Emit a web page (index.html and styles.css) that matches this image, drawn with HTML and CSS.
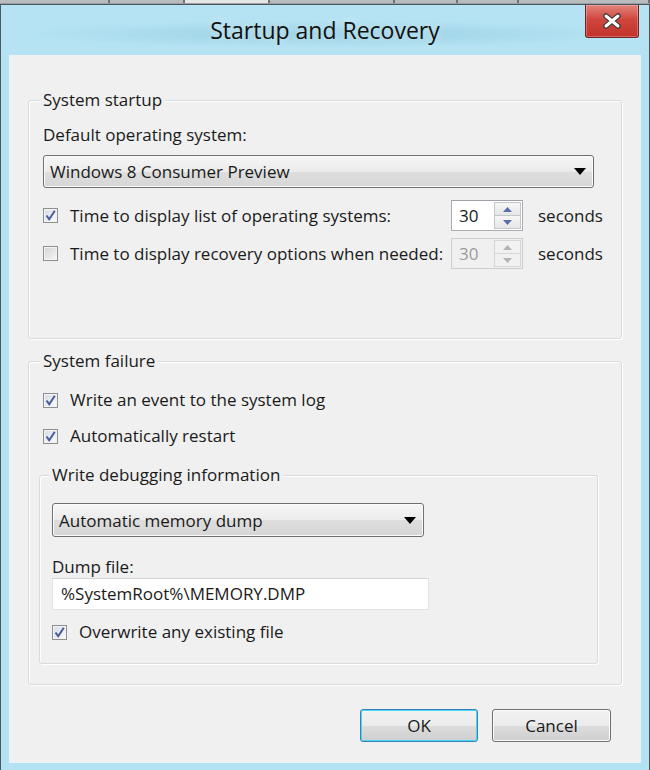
FILE: index.html
```html
<!DOCTYPE html>
<html lang="en">
<head>
    <meta charset="UTF-8">
    <meta name="viewport" content="width=device-width, initial-scale=1.0">
    <title>Startup and Recovery</title>
    <link rel="stylesheet" href="styles.css">
</head>
<body>
    <div class="taskstrip">
        <span style="width:110px"></span>
        <span style="width:75px"></span>
        <span class="active" style="width:85px"></span>
        <span style="width:125px"></span>
        <span style="width:63px"></span>
        <span style="width:60px"></span>
        <span style="width:132px"></span>
    </div>

    <div class="window">
        <div class="titlebar">
            <span></span>
            <span class="title">Startup and Recovery</span>
            <button class="close-btn" aria-label="Close">
                <svg width="20" height="16" viewBox="0 0 20 16">
                    <path d="M4 3 L16 13 M16 3 L4 13" stroke="#3a3a3a" stroke-width="5.5" stroke-linecap="round"/>
                    <path d="M4 3 L16 13 M16 3 L4 13" stroke="#ffffff" stroke-width="3" stroke-linecap="round"/>
                </svg>
            </button>
        </div>

        <div class="client">
            <!-- System startup -->
            <fieldset class="group startup">
                <legend>System startup</legend>
                <div class="label first">Default operating system:</div>
                <div class="select os-select">
                    <span>Windows 8 Consumer Preview</span>
                    <svg width="12" height="7" viewBox="0 0 12 7"><path d="M0 0 H12 L6 7 Z" fill="#000"/></svg>
                </div>

                <div class="timer-row row-one">
                    <label class="check-item">
                        <span class="check checked">
                            <svg width="13" height="13" viewBox="0 0 13 13"><path d="M2.5 6.5 L5.2 10.2 L10.8 1.8" fill="none" stroke="#4a5d9c" stroke-width="2"/></svg>
                        </span>
                        Time to display list of operating systems:
                    </label>
                    <div class="spin">
                        <span class="spin-value">30</span>
                        <span class="spin-btns">
                            <span class="spin-btn"><svg width="9" height="5" viewBox="0 0 9 5"><path d="M0 5 L4.5 0 L9 5 Z" fill="#5a6eae"/></svg></span>
                            <span class="spin-btn"><svg width="9" height="5" viewBox="0 0 9 5"><path d="M0 0 H9 L4.5 5 Z" fill="#5a6eae"/></svg></span>
                        </span>
                    </div>
                    <span class="unit">seconds</span>
                </div>

                <div class="timer-row row-two">
                    <label class="check-item">
                        <span class="check"></span>
                        Time to display recovery options when needed:
                    </label>
                    <div class="spin disabled">
                        <span class="spin-value">30</span>
                        <span class="spin-btns">
                            <span class="spin-btn"><svg width="9" height="5" viewBox="0 0 9 5"><path d="M0 5 L4.5 0 L9 5 Z" fill="#b4b4b4"/></svg></span>
                            <span class="spin-btn"><svg width="9" height="5" viewBox="0 0 9 5"><path d="M0 0 H9 L4.5 5 Z" fill="#b4b4b4"/></svg></span>
                        </span>
                    </div>
                    <span class="unit">seconds</span>
                </div>
            </fieldset>

            <!-- System failure -->
            <fieldset class="group failure">
                <legend>System failure</legend>
                <label class="check-item event-log">
                    <span class="check checked">
                        <svg width="13" height="13" viewBox="0 0 13 13"><path d="M2.5 6.5 L5.2 10.2 L10.8 1.8" fill="none" stroke="#4a5d9c" stroke-width="2"/></svg>
                    </span>
                    Write an event to the system log
                </label>
                <label class="check-item auto-restart">
                    <span class="check checked">
                        <svg width="13" height="13" viewBox="0 0 13 13"><path d="M2.5 6.5 L5.2 10.2 L10.8 1.8" fill="none" stroke="#4a5d9c" stroke-width="2"/></svg>
                    </span>
                    Automatically restart
                </label>

                <fieldset class="group debug">
                    <legend>Write debugging information</legend>
                    <div class="select dump-select">
                        <span>Automatic memory dump</span>
                        <svg width="12" height="7" viewBox="0 0 12 7"><path d="M0 0 H12 L6 7 Z" fill="#000"/></svg>
                    </div>
                    <div class="label dump-label">Dump file:</div>
                    <div class="textbox">%SystemRoot%\MEMORY.DMP</div>
                    <label class="check-item overwrite">
                        <span class="check checked">
                            <svg width="13" height="13" viewBox="0 0 13 13"><path d="M2.5 6.5 L5.2 10.2 L10.8 1.8" fill="none" stroke="#4a5d9c" stroke-width="2"/></svg>
                        </span>
                        Overwrite any existing file
                    </label>
                </fieldset>
            </fieldset>

            <div class="actions">
                <button class="btn default">OK</button>
                <button class="btn">Cancel</button>
            </div>
        </div>
    </div>
</body>
</html>
```

FILE: styles.css
```css
html, body {
    margin: 0;
    padding: 0;
}
body {
    width: 650px;
    height: 770px;
    overflow: hidden;
    background: #8f9396;
    font-family: "Open Sans", "Noto Sans", sans-serif;
    font-size: 17px;
    color: #1a1a1a;
}
.taskstrip {
    display: flex;
    height: 4px;
    background: #9a9ea1;
}
.taskstrip span {
    height: 3px;
    border-right: 2px solid #6e7275;
    background: #b9bcbe;
}
.taskstrip .active {
    background: #e6e6e6;
}
.window {
    border: 1px solid #4b565e;
    border-bottom: none;
    background: #b3e2f3;
    padding: 0 8px 8px;
}
.titlebar {
    display: grid;
    grid-template-columns: 1fr auto 1fr;
    height: 50px;
    margin: 0 -8px;
    background: radial-gradient(ellipse 300px 14px at 50% 58%, rgba(120, 185, 208, 0.45), rgba(120, 185, 208, 0) 100%), #b5e3f3;
}
.title {
    font-size: 23px;
    line-height: 50px;
    color: #111;
    text-shadow: 0 0 8px rgba(255, 255, 255, 0.6);
}
.close-btn {
    justify-self: end;
    align-self: start;
    width: 54px;
    height: 33px;
    margin-right: 10px;
    padding: 0;
    border: 1px solid #6d2622;
    border-top: none;
    border-radius: 0 0 3px 3px;
    background: linear-gradient(#e2857d, #d0463e 45%, #c1322a);
    box-shadow: inset 0 0 0 1px rgba(255, 200, 195, 0.35);
    display: flex;
    align-items: center;
    justify-content: center;
}
.client {
    background: #f0f0f0;
    padding: 35px 19px 20px;
    box-shadow: 0 1px 0 #e8f6fb;
}
.group {
    margin: 0;
    padding: 0 14px;
    min-width: 0;
    border: 1px solid #d5dbdf;
    border-radius: 3px;
    box-shadow: inset 1px 1px 0 #fff, 1px 1px 0 #fff;
}
.group legend {
    padding: 0 3px;
    margin-left: -3px;
    line-height: 20px;
    background: #f0f0f0;
}
.startup {
    padding-bottom: 69px;
}
.failure {
    margin-top: 12px;
    padding-bottom: 20px;
}
.label {
    line-height: 20px;
}
.label.first {
    margin-top: 15px;
}
.select {
    display: flex;
    align-items: center;
    justify-content: space-between;
    box-sizing: border-box;
    padding: 0 7px 0 6px;
    border: 1px solid #707070;
    border-radius: 3px;
    background: linear-gradient(#f6f6f6, #ebebeb 50%, #dedede 51%, #d6d6d6);
    box-shadow: inset 0 0 0 1px #fbfbfb;
}
.os-select {
    margin-top: 10px;
    height: 33px;
    width: 551px;
}
.timer-row {
    display: grid;
    grid-template-columns: minmax(0, 1fr) 72px 69px;
    column-gap: 15px;
    align-items: center;
    height: 31px;
}
.row-one {
    margin-top: 12px;
}
.row-two {
    margin-top: 7px;
}
.check-item {
    display: flex;
    align-items: center;
    gap: 12px;
    line-height: 20px;
    white-space: nowrap;
}
.check {
    box-sizing: border-box;
    width: 15px;
    height: 15px;
    flex: none;
    border: 1px solid #8e8f8f;
    background: linear-gradient(135deg, #d4d4d4, #f7f7f7);
    box-shadow: inset 0 0 0 1px #f4f4f4;
    display: flex;
    align-items: center;
    justify-content: center;
}
.check.checked {
    background: linear-gradient(135deg, #d6dbe6, #fbfbfb);
}
.spin {
    display: flex;
    box-sizing: border-box;
    height: 31px;
    border: 1px solid #abadb3;
    border-top-color: #9fa2a8;
    background: #fff;
}
.spin-value {
    flex: 1;
    padding-left: 7px;
    line-height: 29px;
}
.spin-btns {
    display: flex;
    flex-direction: column;
    width: 27px;
    margin: 1px 1px 1px 0;
}
.spin-btn {
    flex: 1;
    display: flex;
    align-items: center;
    justify-content: center;
    border: 1px solid #c3c6ca;
    background: linear-gradient(#f7f7f7, #e6e6e6);
}
.spin-btn + .spin-btn {
    border-top: none;
}
.spin.disabled {
    background: #f0f0f0;
    border-color: #cdcdcd;
}
.spin.disabled .spin-value {
    color: #9c9c9c;
}
.spin.disabled .spin-btn {
    border-color: #d6d6d6;
    background: #f1f1f1;
}
.unit {
    line-height: 20px;
}
.event-log {
    margin-top: 19px;
}
.auto-restart {
    margin-top: 16px;
}
.debug {
    margin: 19px 9px 0 -4px;
    padding: 0 12px 21px;
}
.dump-select {
    margin-top: 18px;
    height: 34px;
    width: 372px;
}
.dump-label {
    margin-top: 20px;
}
.textbox {
    box-sizing: border-box;
    margin-top: 1px;
    width: 377px;
    height: 32px;
    padding-left: 8px;
    line-height: 30px;
    border: 1px solid #e2e2e2;
    border-top-color: #d4d4d4;
    background: #fff;
}
.overwrite {
    margin-top: 12px;
}
.actions {
    display: flex;
    justify-content: flex-end;
    gap: 14px;
    margin-top: 24px;
    padding-right: 11px;
}
.btn {
    width: 118px;
    height: 33px;
    padding: 0;
    font-family: inherit;
    font-size: 17px;
    color: #1a1a1a;
    border: 1px solid #707070;
    border-radius: 3px;
    background: linear-gradient(#f2f2f2, #ebebeb 50%, #dddddd 51%, #cfcfcf);
    box-shadow: inset 0 0 0 1px #fbfbfb;
}
.btn + .btn {
    width: 119px;
}
.btn.default {
    border-color: #3c7fb1;
    box-shadow: inset 0 0 0 1px #48d8fb;
}
```
